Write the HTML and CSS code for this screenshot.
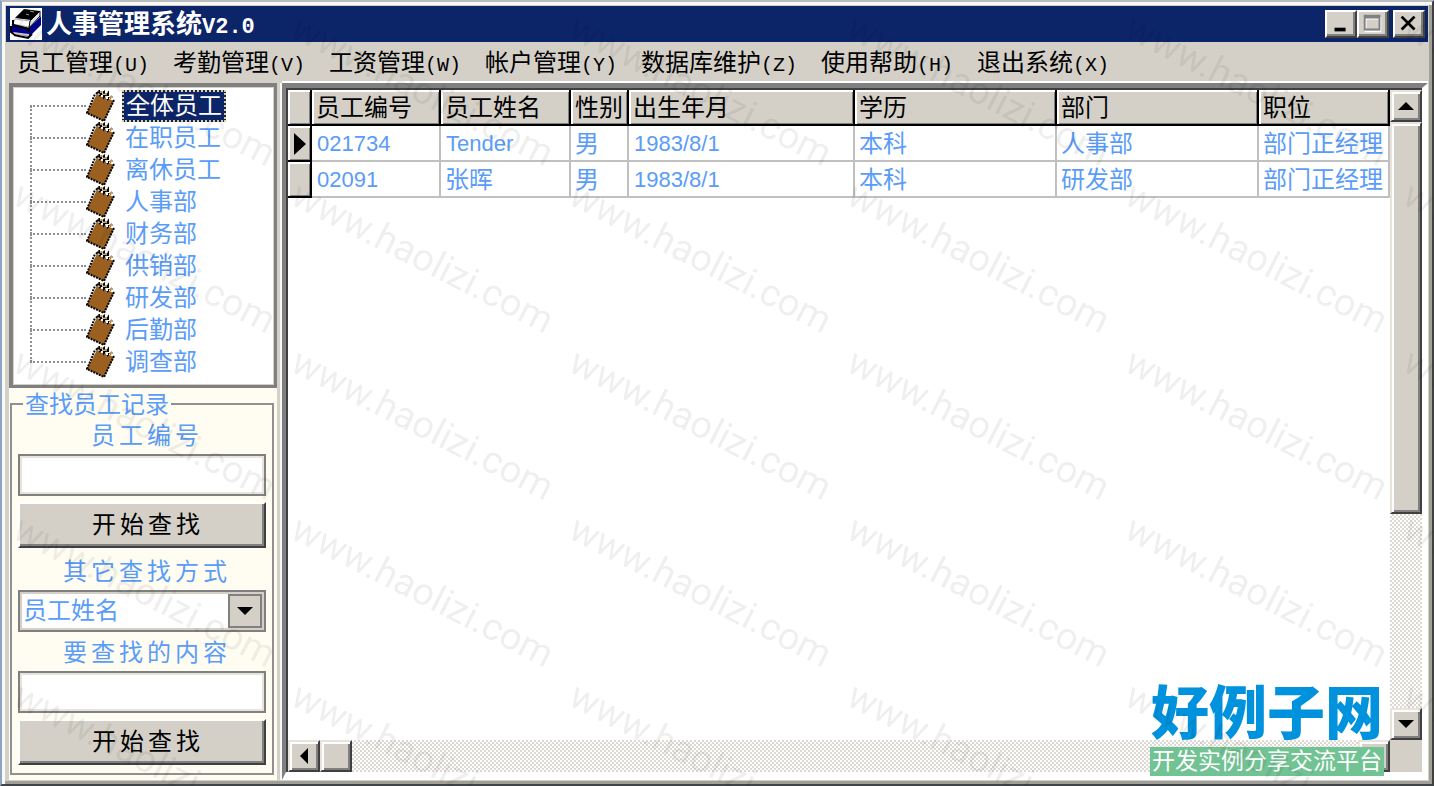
FILE: index.html
```
<!DOCTYPE html>
<html lang="zh-CN">
<head>
  <meta charset="utf-8">
  <title>人事管理系统V2.0</title>
  <meta name="viewport" content="width=device-width, initial-scale=1">
  <link rel="stylesheet" href="styles.css">
</head>
<body>
  <svg class="defs" aria-hidden="true">
    <symbol id="notebook" viewBox="0 0 30 32">
      <path d="M11 4 L28 11 L18 31 L1 23 Z" fill="#996020"/>
      <path d="M28 10 L18 31 L1 23 L9 4" fill="none" stroke="#000" stroke-width="2" stroke-dasharray="2 1"/>
      <path d="M10 4 l3 -3 l1 4 l4 -3 l0 5 l4 -4 l0 6 l5 -3" fill="none" stroke="#000" stroke-width="2" stroke-dasharray="3 1"/>
      <path d="M14 2 h2 M19 4 h2 M24 7 h2" stroke="#d89830" stroke-width="2"/>
      <path d="M15 6 h2 M20 8 h2" stroke="#fff" stroke-width="2"/>
    </symbol>
  </svg>

  <div class="window">
    <header class="titlebar">
      <svg class="app-icon" viewBox="0 0 32 32" aria-hidden="true">
        <rect width="32" height="32" fill="#fff"/>
        <path d="M14 1 L30 3 L21 12 L5 10 Z" fill="#000"/>
        <path d="M20 3 l4 1 M16 6 l3 1" stroke="#999" stroke-width="1"/>
        <path d="M5 11 L20 13 L19 19 L3 16 Z" fill="#fff" stroke="#aaa" stroke-width="1"/>
        <path d="M20 13 L30 3 L30 8 L19 20 Z" fill="#ddd" stroke="#000" stroke-width="1"/>
        <path d="M2 16 L19 20 L31 8 L31 17 L19 29 L1 24 Z" fill="#00008b"/>
        <path d="M1 18 v6 l4 3 M3 12 v5 l16 4 M19 20 v4" fill="none" stroke="#000" stroke-width="2"/>
        <path d="M3 24 L19 26 L19 28 L6 27 Z" fill="#ccc"/>
        <path d="M4 27 L18 30 L22 26" fill="none" stroke="#000" stroke-width="2"/>
      </svg>
      <h1>人事管理系统<span>V2.0</span></h1>
      <div class="win-buttons">
        <button class="win-btn" aria-label="最小化"><svg viewBox="0 0 30 26"><path d="M8 19 h12" stroke="#000" stroke-width="4"/></svg></button>
        <button class="win-btn" aria-label="最大化"><svg viewBox="0 0 30 26"><path d="M7 7 h16 v14 h-16 z" fill="none" stroke="#fff" stroke-width="2"/><path d="M6 4 h16 v15 h-16 z M6 6 h16" fill="none" stroke="#808080" stroke-width="2"/></svg></button>
        <button class="win-btn win-close" aria-label="关闭"><svg viewBox="0 0 30 26"><path d="M7 5 L21 19 M21 5 L7 19" stroke="#000" stroke-width="3"/></svg></button>
      </div>
    </header>

    <nav class="menu">
      <button>员工管理<span>(U)</span></button>
      <button>考勤管理<span>(V)</span></button>
      <button>工资管理<span>(W)</span></button>
      <button>帐户管理<span>(Y)</span></button>
      <button>数据库维护<span>(Z)</span></button>
      <button>使用帮助<span>(H)</span></button>
      <button>退出系统<span>(X)</span></button>
    </nav>

    <main class="content">
      <aside class="sidebar">
        <ul class="tree">
          <li><svg><use href="#notebook"/></svg><a href="#" class="selected">全体员工</a></li>
          <li><svg><use href="#notebook"/></svg><a href="#">在职员工</a></li>
          <li><svg><use href="#notebook"/></svg><a href="#">离休员工</a></li>
          <li><svg><use href="#notebook"/></svg><a href="#">人事部</a></li>
          <li><svg><use href="#notebook"/></svg><a href="#">财务部</a></li>
          <li><svg><use href="#notebook"/></svg><a href="#">供销部</a></li>
          <li><svg><use href="#notebook"/></svg><a href="#">研发部</a></li>
          <li><svg><use href="#notebook"/></svg><a href="#">后勤部</a></li>
          <li><svg><use href="#notebook"/></svg><a href="#">调查部</a></li>
        </ul>

        <fieldset class="search">
          <legend>查找员工记录</legend>
          <label for="empNo">员工编号</label>
          <input type="text" id="empNo">
          <button class="find">开始查找</button>
          <label for="mode">其它查找方式</label>
          <div class="combo">
            <select id="mode">
              <option>员工姓名</option>
            </select>
            <span class="combo-arrow"><svg viewBox="0 0 16 8"><path d="M0 0 h16 l-8 8 z"/></svg></span>
          </div>
          <label for="keyword">要查找的内容</label>
          <input type="text" id="keyword">
          <button class="find">开始查找</button>
        </fieldset>
      </aside>

      <section class="grid">
        <div class="grid-view">
          <table>
            <colgroup>
              <col class="c-mark"><col class="c-no"><col class="c-name"><col class="c-sex">
              <col class="c-birth"><col class="c-edu"><col class="c-dept"><col>
            </colgroup>
            <thead>
              <tr><th></th><th>员工编号</th><th>员工姓名</th><th>性别</th><th>出生年月</th><th>学历</th><th>部门</th><th>职位</th></tr>
            </thead>
            <tbody>
              <tr>
                <th><svg class="marker" viewBox="0 0 12 22"><path d="M0 0 L12 11 L0 22 Z"/></svg></th>
                <td class="latin">021734</td><td class="latin">Tender</td><td>男</td><td class="latin">1983/8/1</td><td>本科</td><td>人事部</td><td>部门正经理</td>
              </tr>
              <tr>
                <th></th>
                <td class="latin">02091</td><td>张晖</td><td>男</td><td class="latin">1983/8/1</td><td>本科</td><td>研发部</td><td>部门正经理</td>
              </tr>
            </tbody>
          </table>
        </div>
        <div class="scroll scroll-v">
          <button aria-label="向上"><svg viewBox="0 0 16 16"><path d="M0 12 h16 l-8 -8 z"/></svg></button>
          <div class="thumb"></div>
          <div class="track"></div>
          <button aria-label="向下"><svg viewBox="0 0 16 16"><path d="M0 4 h16 l-8 8 z"/></svg></button>
        </div>
        <div class="scroll scroll-h">
          <button aria-label="向左"><svg viewBox="0 0 16 16"><path d="M12 0 v16 l-8 -8 z"/></svg></button>
          <div class="thumb"></div>
          <div class="track"></div>
          <button aria-label="向右"><svg viewBox="0 0 16 16"><path d="M4 0 v16 l8 -8 z"/></svg></button>
        </div>
      </section>
    </main>
  </div>

  <div class="brand">
    <strong>好例子网</strong>
    <span>开发实例分享交流平台</span>
  </div>

  <div class="watermark" aria-hidden="true">
    <span>www.haolizi.com</span><span>www.haolizi.com</span><span>www.haolizi.com</span><span>www.haolizi.com</span><span>www.haolizi.com</span><span>www.haolizi.com</span>
    <span>www.haolizi.com</span><span>www.haolizi.com</span><span>www.haolizi.com</span><span>www.haolizi.com</span><span>www.haolizi.com</span><span>www.haolizi.com</span>
    <span>www.haolizi.com</span><span>www.haolizi.com</span><span>www.haolizi.com</span><span>www.haolizi.com</span><span>www.haolizi.com</span><span>www.haolizi.com</span>
    <span>www.haolizi.com</span><span>www.haolizi.com</span><span>www.haolizi.com</span><span>www.haolizi.com</span><span>www.haolizi.com</span><span>www.haolizi.com</span>
    <span>www.haolizi.com</span><span>www.haolizi.com</span><span>www.haolizi.com</span><span>www.haolizi.com</span><span>www.haolizi.com</span><span>www.haolizi.com</span>
  </div>
</body>
</html>
```
FILE: styles.css
```
*, *::before, *::after {
  box-sizing: border-box;
  margin: 0;
  padding: 0;
}

html, body {
  height: 100%;
}

body {
  position: relative;
  overflow: hidden;
  font-family: "Liberation Sans", "Noto Sans CJK SC", sans-serif;
  font-size: 24px;
  line-height: 32px;
  color: #000;
}

button, input, select {
  font: inherit;
  color: inherit;
  border-radius: 0;
}

.defs {
  display: none;
}

/* window frame */
.window {
  display: flex;
  flex-direction: column;
  height: 100%;
  background: #d4d0c8;
  border: 2px solid;
  border-color: #b8bcc0 #404040 #404448 #8ca4c4;
  box-shadow: inset 3px 3px #f8f8f4, inset -3px -3px #a0a098;
  padding: 4px;
}

.titlebar {
  display: flex;
  align-items: center;
  height: 36px;
  padding: 0 3px 0 4px;
  background: #0c2468;
  color: #fff;
}

.app-icon {
  width: 32px;
  height: 32px;
}

.titlebar h1 {
  flex: 1;
  margin-left: 4px;
  padding-top: 4px;
  font-size: 26px;
  font-weight: bold;
}

.titlebar h1 span {
  font-family: "Liberation Mono", monospace;
  font-size: 22px;
}

.win-buttons {
  display: flex;
}

.win-btn {
  width: 32px;
  height: 28px;
  background: #d4d0c8;
  border: 2px solid;
  border-color: #fff #404040 #404040 #fff;
  box-shadow: inset -2px -2px #808080;
}

.win-btn svg {
  display: block;
  width: 100%;
  height: 100%;
}

.win-close {
  margin-left: 4px;
}

/* menu bar */
.menu {
  display: flex;
  gap: 24px;
  height: 41px;
  padding: 3px 11px 0;
}

.menu button {
  background: none;
  border: none;
  white-space: nowrap;
}

.menu span {
  font-family: "Liberation Mono", monospace;
  font-size: 20px;
}

.content {
  flex: 1;
  display: flex;
  min-height: 0;
  padding-left: 3px;
}

/* left side */
.sidebar {
  display: flex;
  flex-direction: column;
  width: 270px;
  background: #fffdf2;
  border-right: 2px solid #d4d0c8;
}

.tree {
  flex: none;
  padding: 3px 0 7px 17px;
  background: #fff;
  border: 4px solid #808080;
  border-width: 4px 3px 3px 4px;
  box-shadow: inset 0 0 0 1px #d4d0c8;
  list-style: none;
}

.tree li {
  display: flex;
  align-items: center;
  height: 32px;
  position: relative;
}

/* dotted branch lines */
.tree li::before {
  content: "";
  width: 56px;
  border-top: 2px dotted #909090;
}

.tree li::after {
  content: "";
  position: absolute;
  left: 0;
  top: 16px;
  height: 32px;
  border-left: 2px dotted #909090;
}

.tree li:last-child::after {
  display: none;
}

.tree svg {
  width: 30px;
  height: 32px;
}

.tree a {
  height: 32px;
  margin-left: 6px;
  padding: 0 3px;
  color: #5a9cf8;
  text-decoration: none;
}

.tree .selected {
  padding: 0 2px;
  background: #0c2468;
  border: 2px dotted #e0d090;
  line-height: 28px;
  color: #fff;
}

.search {
  flex: 1;
  display: flex;
  flex-direction: column;
  margin: 2px 3px 5px 1px;
  padding: 0 6px;
  border: 2px solid #909090;
  color: #5a9cf8;
}

.search legend {
  margin-left: 5px;
  padding: 2px 2px 0;
  line-height: 26px;
}

.search label {
  height: 36px;
  padding-left: 10px;
  line-height: 36px;
  text-align: center;
  letter-spacing: 4px;
}

.search input {
  width: 100%;
  height: 42px;
  padding: 0 6px;
  background: #fff;
  border: 2px solid #808080;
  box-shadow: inset 0 0 0 2px #e8e4dc;
}

.find {
  width: 100%;
  height: 46px;
  margin: 6px 0;
  padding-left: 12px;
  background: #d4d0c8;
  border: 2px solid;
  border-color: #fff #404040 #404040 #fff;
  box-shadow: inset -2px -2px #808080;
  color: #000;
  letter-spacing: 4px;
}

.combo {
  position: relative;
  height: 42px;
  margin-bottom: 3px;
}

.combo select {
  width: 100%;
  height: 100%;
  padding: 0 40px 0 3px;
  appearance: none;
  background: #fff;
  border: 2px solid #808080;
  box-shadow: inset 0 0 0 2px #d4d0c8;
}

.combo-arrow {
  position: absolute;
  top: 4px;
  right: 4px;
  bottom: 4px;
  display: flex;
  align-items: center;
  justify-content: center;
  width: 34px;
  background: #d4d0c8;
  border: 2px solid #808080;
  pointer-events: none;
}

.combo-arrow svg {
  width: 16px;
  height: 8px;
}

/* data grid */
.grid {
  flex: 1;
  display: grid;
  grid-template-columns: 1fr 32px;
  grid-template-rows: 1fr 32px;
  min-width: 0;
  margin-left: 3px;
  padding: 2px 0 0 2px;
  background: #d4d0c8;
  border: 6px solid;
  border-width: 5px 6px 8px 4px;
  border-color: #808080 #fff #fff #808080;
  box-shadow: -2px 0 #f8f8f8, 0 -2px #fff, inset 2px 2px #404040;
}

.grid-view {
  min-width: 0;
  overflow: hidden;
  background: #fff;
}

table {
  width: 100%;
  table-layout: fixed;
  border-collapse: separate;
  border-spacing: 0;
}

.c-mark { width: 24px; }
.c-no { width: 129px; }
.c-name { width: 130px; }
.c-sex { width: 58px; }
.c-birth { width: 226px; }
.c-edu { width: 202px; }
.c-dept { width: 202px; }

th, td {
  height: 36px;
  padding-top: 2px;
  white-space: nowrap;
  text-align: left;
  font-weight: normal;
  line-height: 32px;
}

th {
  padding-left: 4px;
  background: #d4d0c8;
  border-right: 2px solid #000;
  border-bottom: 2px solid #000;
  box-shadow: inset 2px 2px #fff, inset -1px -1px #808080;
}

td {
  padding-left: 4px;
  border-right: 2px solid #c0c0c0;
  border-bottom: 2px solid #c0c0c0;
  color: #5a9cf8;
}

.latin {
  padding-left: 5px;
  font-size: 22px;
}

.marker {
  display: block;
  width: 12px;
  height: 22px;
  margin-left: 2px;
}

/* scroll bars */
.scroll {
  display: flex;
  background: #fff;
}

.scroll-v {
  flex-direction: column;
}

.scroll button, .thumb {
  flex: none;
  width: 32px;
  height: 32px;
  background: #d4d0c8;
  border: 2px solid;
  border-color: #e8e4dc #404040 #404040 #e8e4dc;
  box-shadow: inset 2px 2px #fff, inset -2px -2px #808080;
}

.scroll button {
  display: flex;
  align-items: center;
  justify-content: center;
}

.scroll svg {
  flex: none;
  width: 16px;
  height: 16px;
}

.scroll-v .thumb {
  flex: 2 1 0;
  height: auto;
}

.track {
  flex: 1 1 0;
  background: conic-gradient(#dcd9d2 25%, #fff 0 50%, #dcd9d2 0 75%, #fff 0);
  background-size: 4px 4px;
}

/* site logo over the corner */
.brand {
  position: absolute;
  right: 50px;
  bottom: 10px;
  display: flex;
  flex-direction: column;
  align-items: center;
}

.brand strong {
  height: 72px;
  font-family: "Noto Sans CJK SC", sans-serif;
  font-size: 58px;
  font-weight: 900;
  line-height: 68px;
  color: #0092dd;
}

.brand span {
  padding: 0 2px;
  background: #72c393;
  font-size: 23px;
  line-height: 29px;
  color: #fff;
}

.watermark {
  position: absolute;
  inset: 0;
  display: grid;
  grid-template-columns: repeat(6, 278px);
  grid-auto-rows: 167px;
  padding: 6px 0 0 26px;
  overflow: hidden;
  pointer-events: none;
  font-family: Roboto, sans-serif;
  font-size: 38px;
  line-height: 42px;
  color: rgba(0, 0, 0, 0.08);
}

.watermark span {
  width: 0;
  height: 42px;
  transform: rotate(27deg);
  transform-origin: 0 0;
}
```
